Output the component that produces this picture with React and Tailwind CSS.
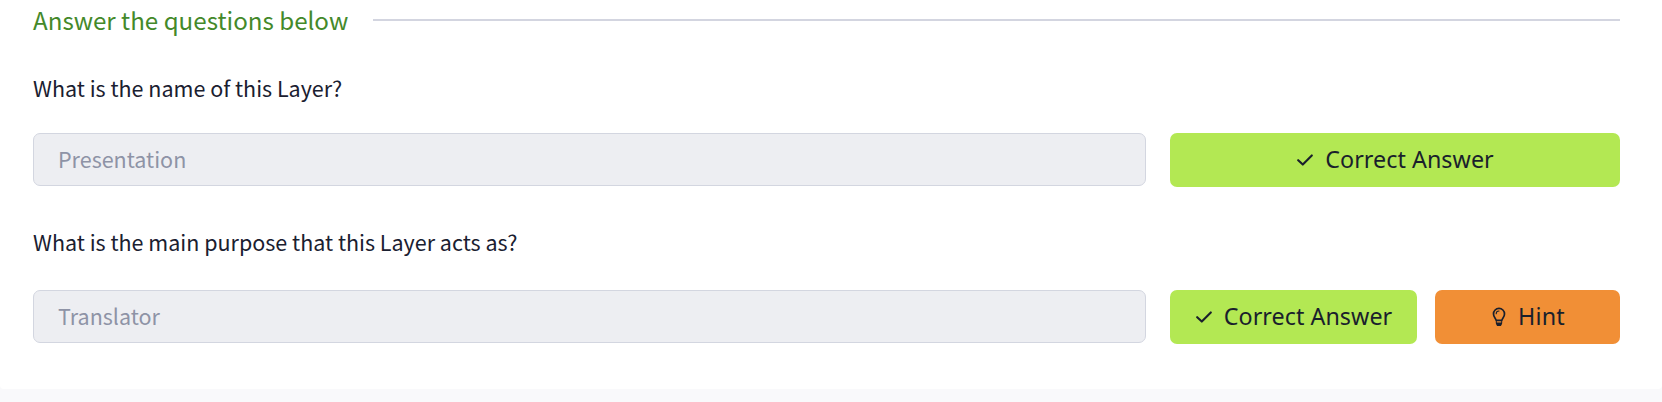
function CheckIcon() {
  return (
    <svg className="h-[18px] w-4 shrink-0" viewBox="0 0 16 18" fill="none" stroke="currentColor" strokeWidth="2.1" strokeLinecap="round" strokeLinejoin="round">
      <path d="M1.2 9.2 5.8 13.6 14.8 4.4" />
    </svg>
  );
}

function BulbIcon() {
  return (
    <svg className="h-5 w-4 shrink-0" viewBox="0 0 16 20" fill="none" stroke="currentColor" strokeWidth="1.7" strokeLinecap="round" strokeLinejoin="round">
      <path d="M5.2 13.4C4.9 11.5 2.5 10.2 2.5 6.9a5.5 5.5 0 0 1 11 0c0 3.3-2.4 4.6-2.7 6.5z" />
      <path d="M5.2 6.8A2.8 2.8 0 0 1 8 4" strokeWidth="1.1" />
      <path d="M5 15.6h6V17L9.9 19H6.1L5 17z" fill="currentColor" stroke="none" />
      <path d="M5.3 14v2M10.7 14v2" strokeWidth="1" />
    </svg>
  );
}

function AnswerField({ label, value }) {
  return (
    <input
      type="text"
      disabled
      aria-label={label}
      value={value}
      className="h-[53px] w-[1113px] shrink-0 rounded-[7px] border border-[#d3d6e0] bg-[#edeef2] px-6 pb-[3px] text-[21.5px] text-[#8e93a6]"
    />
  );
}

function Button({ className, children }) {
  return (
    <button
      type="button"
      className={`flex h-[54px] items-center justify-center rounded-[7px] font-['Noto_Sans',sans-serif] text-[23.3px] leading-8 text-[#1a1f2c] ${className}`}
    >
      {children}
    </button>
  );
}

function CorrectButton({ className }) {
  return (
    <Button className={`bg-[#b3e853] gap-3 pl-px ${className}`}>
      <CheckIcon />
      <span className="-mt-0.5 tracking-[0.04px]">Correct Answer</span>
    </Button>
  );
}

export default function App() {
  return (
    <div className="h-[402px] overflow-hidden bg-[#f9f9fb] font-['Noto_Sans_CJK_SC',sans-serif] text-[#1a2030]">
      <main className="h-[389px] rounded-b-[4px] bg-white pr-[42px] pl-[33px] pt-1">
        <div className="flex h-8 items-center gap-[25px]">
          <h2 className="w-[315px] whitespace-nowrap text-[24.15px] leading-8 text-[#44892a]">Answer the questions below</h2>
          <div className="h-0.5 flex-1 bg-[#d3d5e0]" />
        </div>

        <section className="mt-9">
          <p className="text-[21.5px] leading-8">What is the name of this Layer?</p>
          <div className="mt-[29px] flex gap-6">
            <AnswerField label="Layer name" value="Presentation" />
            <CorrectButton className="flex-1" />
          </div>
        </section>

        <section className="mt-[39px]">
          <p className="text-[21.5px] leading-8">What is the main purpose that this Layer acts as?</p>
          <div className="mt-8 flex">
            <AnswerField label="Layer purpose" value="Translator" />
            <CorrectButton className="ml-6 w-[247px]" />
            <Button className="ml-[18px] flex-1 gap-[11px] bg-[#f18f36] pl-px">
              <BulbIcon />
              <span className="-mt-0.5 tracking-[0.2px]">Hint</span>
            </Button>
          </div>
        </section>
      </main>
    </div>
  );
}
